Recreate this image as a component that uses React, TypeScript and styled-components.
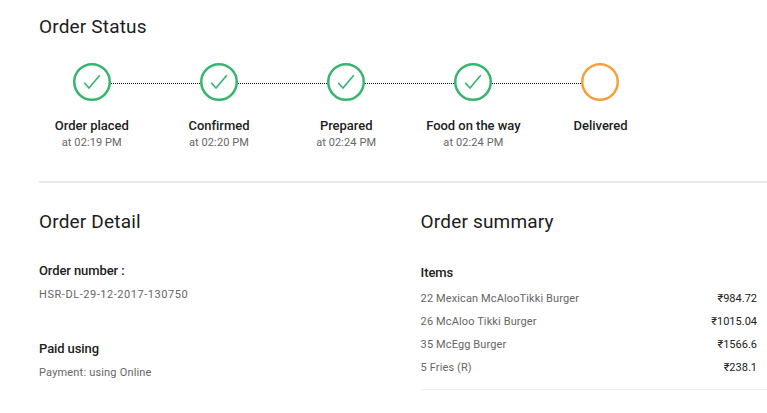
import React, { Fragment } from 'react';
import styled, { createGlobalStyle } from 'styled-components';

const GlobalStyle = createGlobalStyle`
  * { box-sizing: border-box; }
  body { margin: 0; background: #fff; font-family: Roboto, sans-serif; overflow: hidden; }
  h2, h3, p, ol, ul { margin: 0; padding: 0; list-style: none; }
`;

const Page = styled.main`
  width: 767px;
  height: 413px;
  padding: 14px 0 0 39px;
  overflow: hidden;
`;

const Heading = styled.h2`
  font-size: 19px;
  font-weight: 400;
  line-height: 26px;
  letter-spacing: 0.18px;
  color: #1c1c1c;
`;

const Rail = styled.div`
  display: flex;
  align-items: center;
  width: 546px;
  margin: 23px 0 0 34px;
`;

const Line = styled.span`
  flex: 1;
  height: 1px;
  margin-top: 3px;
  background: repeating-linear-gradient(to right, #111 0 1px, transparent 1px 2px);
`;

const Ring = styled.svg`
  width: 38px;
  height: 38px;
  flex: none;
  fill: none;
`;

const Steps = styled.ol`
  display: grid;
  grid-template-columns: repeat(5, 127.2px);
  margin: 16px 0 0 -10.8px;
`;

const Step = styled.li`
  display: flex;
  flex-direction: column;
  align-items: center;
`;

const StepName = styled.strong`
  font-size: 13px;
  font-weight: 500;
  line-height: 18px;
  letter-spacing: -0.03px;
  color: #212121;
  white-space: nowrap;
`;

const StepTime = styled.span`
  font-size: 11px;
  line-height: 16px;
  letter-spacing: 0.1px;
  color: #666;
`;

const Columns = styled.div`
  display: grid;
  grid-template-columns: 381.6px 1fr;
  margin-top: 30px;
  padding-top: 26px;
  border-top: 2px solid #ebebeb;
`;

const Column = styled.section`
  min-width: 0;
`;

const Field = styled.div<{ $top: number }>`
  margin-top: ${(p) => p.$top}px;
`;

const Label = styled.h3`
  font-size: 13px;
  font-weight: 500;
  line-height: 18px;
  letter-spacing: -0.1px;
  color: #212121;
`;

const Value = styled.p<{ $spacing: number }>`
  margin-top: 7px;
  font-size: 11px;
  line-height: 16px;
  letter-spacing: ${(p) => p.$spacing}px;
  color: #666;
`;

const Items = styled.ul`
  margin-top: 5px;
  padding-bottom: 10px;
  border-bottom: 1px solid #eee;
`;

const Item = styled.li`
  display: flex;
  justify-content: space-between;
  padding-right: 10px;
  font-size: 11px;
  line-height: 23px;
  color: #666;
`;

const ItemName = styled.span`
  letter-spacing: 0.12px;
`;

const Price = styled.span`
  color: #212121;
`;

const steps = [
  { name: 'Order placed', time: 'at 02:19 PM' },
  { name: 'Confirmed', time: 'at 02:20 PM' },
  { name: 'Prepared', time: 'at 02:24 PM' },
  { name: 'Food on the way', time: 'at 02:24 PM' },
  { name: 'Delivered', time: '' },
];

const items = [
  ['22 Mexican McAlooTikki Burger', '₹984.72'],
  ['26 McAloo Tikki Burger', '₹1015.04'],
  ['35 McEgg Burger', '₹1566.6'],
  ['5 Fries (R)', '₹238.1'],
];

export default function App() {
  return (
    <Page>
      <GlobalStyle />
      <Heading>Order Status</Heading>
      <Rail>
        {steps.map((s, i) => (
          <Fragment key={s.name}>
            {i > 0 && <Line />}
            <Ring viewBox="0 0 38 38">
              <circle cx="19" cy="19" r="17.75" stroke={s.time ? '#35b56d' : '#f5a03c'} strokeWidth="2.5" />
              {s.time && <path d="M11.2 19.8 L16 25 L26.8 12.3" stroke="#35b56d" strokeWidth="1.6" />}
            </Ring>
          </Fragment>
        ))}
      </Rail>
      <Steps>
        {steps.map((s) => (
          <Step key={s.name}>
            <StepName>{s.name}</StepName>
            <StepTime>{s.time}</StepTime>
          </Step>
        ))}
      </Steps>
      <Columns>
        <Column>
          <Heading>Order Detail</Heading>
          <Field $top={27}>
            <Label>Order number :</Label>
            <Value $spacing={0.55}>HSR-DL-29-12-2017-130750</Value>
          </Field>
          <Field $top={37}>
            <Label>Paid using</Label>
            <Value $spacing={0.18}>Payment: using Online</Value>
          </Field>
        </Column>
        <Column>
          <Heading>Order summary</Heading>
          <Field $top={29}>
            <Label>Items</Label>
            <Items>
              {items.map(([name, price]) => (
                <Item key={name}>
                  <ItemName>{name}</ItemName>
                  <Price>{price}</Price>
                </Item>
              ))}
            </Items>
          </Field>
        </Column>
      </Columns>
    </Page>
  );
}
